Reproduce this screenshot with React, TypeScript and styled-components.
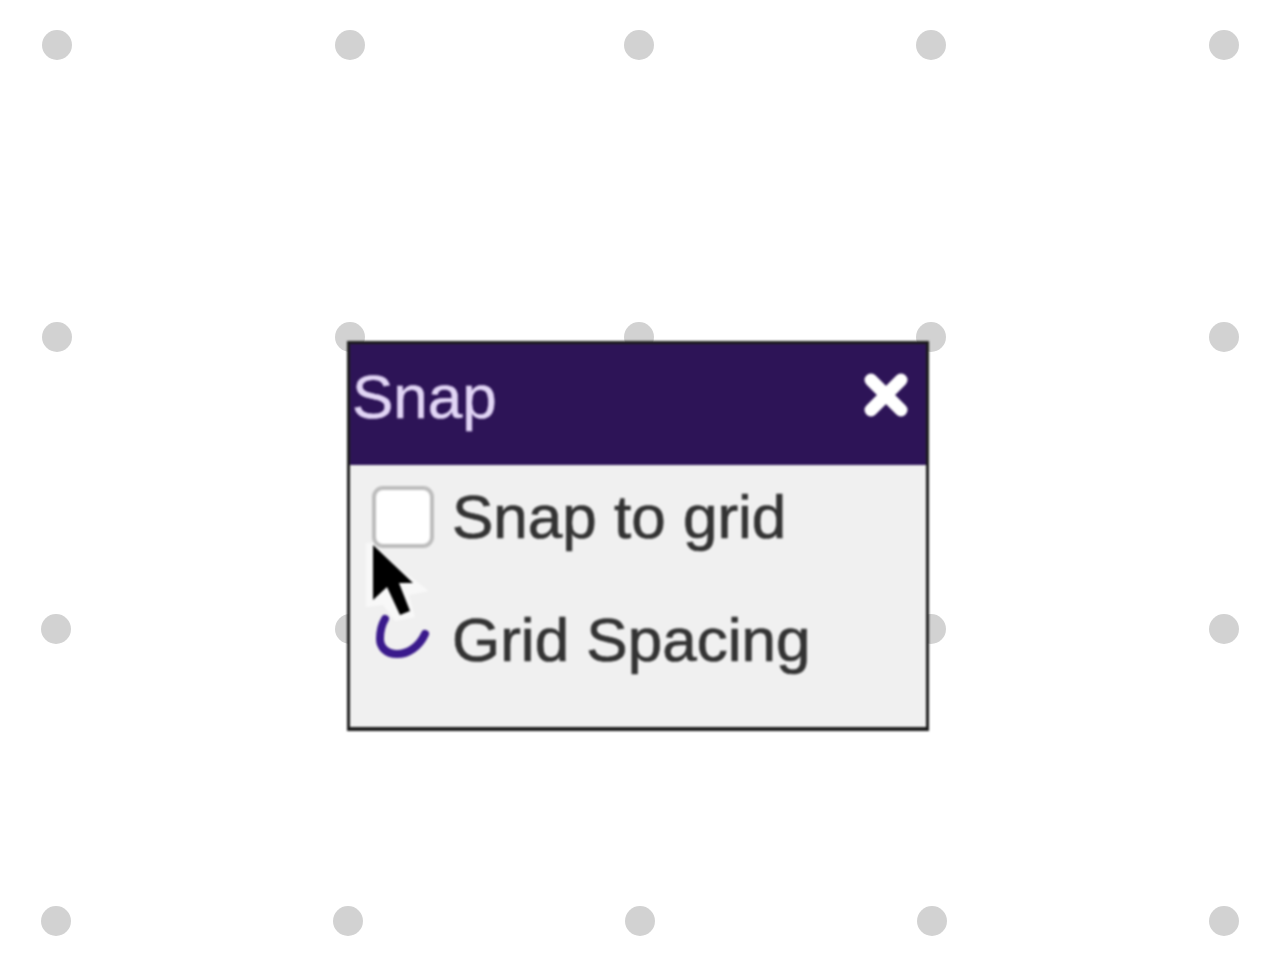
import styled, { createGlobalStyle } from "styled-components";

const dots = [
  [57, 45], [350, 45], [639, 45], [931, 45], [1224, 45],
  [57, 337], [350, 337], [639, 337], [931, 337], [1224, 337],
  [56, 629], [350, 629], [639, 629], [931, 629], [1224, 629],
  [56, 921], [348, 921], [640, 921], [932, 921], [1224, 921],
];

const App = () => {
  return (
    <Canvas>
      <GlobalStyle />
      {dots.map(([x, y]) => (
        <Dot key={`${x}-${y}`} $x={x} $y={y} />
      ))}
      <Panel>
        <Header>
          <Title>Snap</Title>
          <CloseIcon viewBox="0 0 44 44">
            <path d="M7 7 L37 37 M37 7 L7 37" />
          </CloseIcon>
        </Header>
        <Body>
          <Row>
            <Checkbox />
            <Label>Snap to grid</Label>
          </Row>
          <Row>
            <RadioIcon viewBox="0 0 62 62">
              <path d="M53 25 C47 38 36 45 25 45 C14 45 8 38 8 30 C8 22 10 15 13 10" />
            </RadioIcon>
            <Label>Grid Spacing</Label>
          </Row>
        </Body>
        <Cursor viewBox="0 0 70 90">
          <path className="halo" d="M3 6 L3 70 L20 68 L32 84 L52 80 L46 58 L66 54 L40 34 L10 6 Z" />
          <path d="M10 8 L10 63 L24 50 L37 78 L47 74 L36 46 L50 46 Z" />
        </Cursor>
      </Panel>
    </Canvas>
  );
};

const GlobalStyle = createGlobalStyle`
  html, body {
    margin: 0;
    padding: 0;
    background-color: #ffffff;
    overflow: hidden;
  }
`;

const Canvas = styled.div`
  position: relative;
  width: 1280px;
  height: 968px;
  background-color: #ffffff;
  overflow: hidden;
  font-family: "Liberation Sans", Arial, sans-serif;
`;

const Dot = styled.div<{ $x: number; $y: number }>`
  position: absolute;
  left: ${(p) => p.$x - 15}px;
  top: ${(p) => p.$y - 15}px;
  width: 30px;
  height: 30px;
  border-radius: 50%;
  background-color: #d2d2d2;
  filter: blur(0.6px);
`;

const Panel = styled.div`
  position: absolute;
  left: 347px;
  top: 341px;
  width: 582px;
  height: 390px;
  box-sizing: border-box;
  border: 3px solid #1c1c1c;
  border-bottom-width: 4px;
  background-color: #f0f0f0;
  display: flex;
  flex-direction: column;
  filter: blur(0.8px);
`;

const Header = styled.div`
  height: 121px;
  flex-shrink: 0;
  display: flex;
  align-items: center;
  justify-content: space-between;
  padding: 0 18px 0 2px;
  background-color: #2d1457;
`;

const Title = styled.span`
  font-size: 62px;
  line-height: 70px;
  color: #e2d6f6;
  margin-top: -15px;
  -webkit-text-stroke: 0.5px #e2d6f6;
`;

const CloseIcon = styled.svg`
  width: 44px;
  height: 44px;
  margin-top: -20px;
  fill: none;
  stroke: #ffffff;
  stroke-width: 13;
  stroke-linecap: round;
`;

const Body = styled.div`
  flex: 1;
  display: flex;
  flex-direction: column;
  gap: 53px;
  padding: 17px 0 0 22px;
`;

const Row = styled.div`
  display: flex;
  align-items: center;
  gap: 18px;
  height: 70px;
`;

const Checkbox = styled.div`
  width: 62px;
  height: 62px;
  box-sizing: border-box;
  border: 4px solid #bdbdbd;
  border-radius: 11px;
  background-color: #ffffff;
`;

const RadioIcon = styled.svg`
  width: 62px;
  height: 62px;
  fill: none;
  stroke: #3a1a8c;
  stroke-width: 8;
  stroke-linecap: round;
`;

const Label = styled.span`
  font-size: 62px;
  line-height: 70px;
  color: #333333;
  -webkit-text-stroke: 0.7px #333333;
`;

const Cursor = styled.svg`
  position: absolute;
  left: 13px;
  top: 193px;
  width: 70px;
  height: 90px;

  path {
    fill: #000000;
  }

  path.halo {
    fill: #f8f8f8;
  }
`;

export default App;
